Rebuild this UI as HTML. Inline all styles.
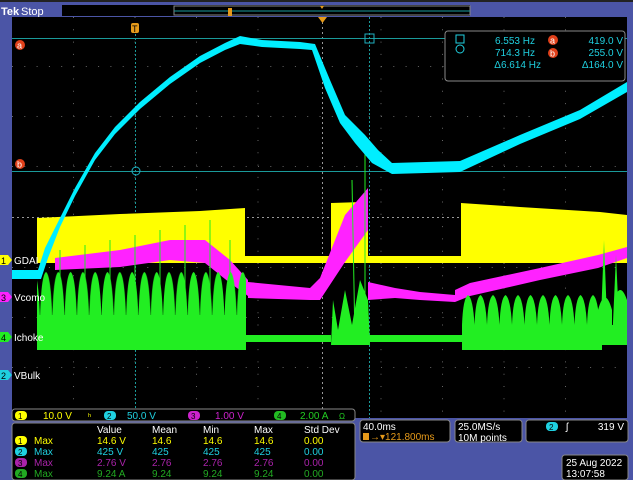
<!DOCTYPE html>
<html><head><meta charset="utf-8"><style>
body{margin:0;width:633px;height:480px;overflow:hidden;background:#4b55a6;font-family:"Liberation Sans",sans-serif}
svg{position:absolute;left:0;top:0}
text{font-family:"Liberation Sans",sans-serif}
</style></head><body>
<svg width="633" height="480" viewBox="0 0 633 480">
<defs>
<pattern id="hump" x="40" y="0" width="12.3" height="480" patternUnits="userSpaceOnUse">
<path d="M0 350 L0 320 Q1 275 6 272 Q11 275 12.3 320 L12.3 350 Z" fill="#22ee22"/>
</pattern>
<pattern id="hump2" x="462" y="0" width="12.5" height="480" patternUnits="userSpaceOnUse">
<path d="M0 350 L0 325 Q1 298 6 295 Q11 298 12.5 325 L12.5 350 Z" fill="#22ee22"/>
</pattern>
<pattern id="scal" x="40" y="0" width="12.3" height="480" patternUnits="userSpaceOnUse">
<path d="M0 340 Q6 352 12.3 340 Z" fill="#22ee22"/>
</pattern>
</defs>
<rect x="0" y="0" width="633" height="480" fill="#4b55a6"/>
<rect x="0" y="0" width="633" height="2" fill="#222"/>
<rect x="62" y="5" width="408" height="11" fill="#000"/>
<rect x="174" y="6" width="296" height="9" fill="none" stroke="#888" stroke-width="1"/>
<line x1="174" y1="11" x2="470" y2="11" stroke="#1a9a9a"/>
<rect x="228" y="8" width="4" height="8" fill="#e69a1a"/>
<path d="M320 6 L324 6 L322 9 Z" fill="#e69a1a"/>
<text x="1" y="15" font-size="11" fill="#fff" font-weight="bold">Tek</text>
<text x="21" y="15" font-size="11" fill="#fff">Stop</text>
<rect x="12" y="17" width="615" height="401" fill="#000"/>
<g stroke="#666" stroke-width="1" stroke-dasharray="1 11.3">
<line x1="12" y1="66.5" x2="627" y2="66.5"/><line x1="12" y1="116.5" x2="627" y2="116.5"/>
<line x1="12" y1="166.5" x2="627" y2="166.5"/><line x1="12" y1="267.5" x2="627" y2="267.5"/>
<line x1="12" y1="317.5" x2="627" y2="317.5"/><line x1="12" y1="367.5" x2="627" y2="367.5"/>
<line x1="73.5" y1="17" x2="73.5" y2="418"/><line x1="135" y1="17" x2="135" y2="418"/>
<line x1="196.5" y1="17" x2="196.5" y2="418"/><line x1="258" y1="17" x2="258" y2="418"/>
<line x1="381" y1="17" x2="381" y2="418"/><line x1="442.5" y1="17" x2="442.5" y2="418"/>
<line x1="504" y1="17" x2="504" y2="418"/><line x1="565.5" y1="17" x2="565.5" y2="418"/>
</g>
<line x1="12" y1="217.5" x2="627" y2="217.5" stroke="#999" stroke-dasharray="2 3"/>
<line x1="322.5" y1="17" x2="322.5" y2="418" stroke="#999" stroke-dasharray="2 3"/>
<path d="M318 17 L327 17 L322.5 23 Z" fill="#e69a1a"/>
<line x1="135.5" y1="26" x2="135.5" y2="418" stroke="#1a9a9a" stroke-dasharray="2 2"/>
<line x1="369.5" y1="17" x2="369.5" y2="418" stroke="#1a9a9a" stroke-dasharray="2 2"/>
<line x1="12" y1="38.5" x2="627" y2="38.5" stroke="#1a9a9a"/>
<line x1="12" y1="171.5" x2="627" y2="171.5" stroke="#1a9a9a"/>
<rect x="131" y="23" width="8" height="10" rx="2" fill="#e69a1a"/>
<text x="132" y="32" font-size="9" fill="#000">T</text>
<rect x="365" y="34" width="9" height="9" fill="none" stroke="#1fb0c0"/>
<circle cx="136" cy="171" r="4" fill="none" stroke="#1fb0c0"/>
<circle cx="20" cy="45" r="5" fill="#e0401a"/><text x="17" y="48.5" font-size="9" fill="#fff">a</text>
<circle cx="20" cy="164" r="5" fill="#e0401a"/><text x="17" y="167.5" font-size="9" fill="#fff">b</text>
<!-- yellow -->
<rect x="37" y="256" width="590" height="7" fill="#ffff00"/>
<path d="M37 263 L37 218 L120 214 L200 211 L245 208 L245 263 Z" fill="#ffff00"/>
<path d="M331 262 L331 203 L362 202 L368 200 L368 262 Z" fill="#ffff00"/>
<path d="M461 262 L461 203 L520 207 L600 212 L627 215 L627 262 Z" fill="#ffff00"/>
<!-- magenta -->
<path d="M55 270 L55 258 L120 250 L170 240 L205 240 L230 260 L248 280 L248 296 L230 283 L205 263 L170 260 L120 267 Z" fill="#ff22ff"/>
<path d="M248 282 L310 288 L320 278 L345 215 L368 188 L368 230 L345 262 L320 300 L310 300 L248 298 Z" fill="#ff22ff"/>
<path d="M368 282 L395 288 L420 292 L455 295 L455 302 L420 300 L395 298 L368 300 Z" fill="#ff22ff"/>
<path d="M455 290 L470 283 L540 268 L598 255 L627 247 L627 258 L598 268 L540 280 L470 296 L455 302 Z" fill="#ff22ff"/>
<!-- green -->
<rect x="37" y="270" width="209" height="80" fill="url(#hump)"/>
<rect x="37" y="315" width="209" height="25" fill="#22ee22"/>
<rect x="37" y="339" width="209" height="14" fill="url(#scal)"/>
<rect x="246" y="335" width="85" height="7" fill="#22ee22"/>
<rect x="369" y="335" width="93" height="7" fill="#22ee22"/>
<path d="M331 345 L333 300 L338 330 L345 290 L352 325 L360 280 L368 300 L370 345 Z" fill="#22ee22"/>
<rect x="462" y="290" width="140" height="60" fill="url(#hump2)"/>
<rect x="462" y="325" width="165" height="20" fill="#22ee22"/>
<path d="M600 345 L604 240 L608 345 Z M612 345 L616 255 L620 345 Z M598 345 L598 310 Q605 285 612 310 L612 345 Z M614 345 L614 300 Q620 280 627 300 L627 345 Z" fill="#22ee22"/>
<g stroke="#22ee22" stroke-width="1">
<line x1="60" y1="340" x2="60" y2="250"/><line x1="85" y1="340" x2="85" y2="245"/><line x1="110" y1="340" x2="110" y2="240"/>
<line x1="135" y1="340" x2="135" y2="235"/><line x1="160" y1="340" x2="160" y2="230"/><line x1="185" y1="340" x2="185" y2="225"/>
<line x1="210" y1="340" x2="210" y2="220"/><line x1="230" y1="340" x2="230" y2="240"/>
<line x1="355" y1="340" x2="352" y2="180"/><line x1="365" y1="340" x2="365" y2="150"/>
</g>
<!-- cyan -->
<path d="M12 270 L38 270 L45 248 L60 218 L75 188 L95 153 L115 127 L140 102 L170 77 L200 56 L225 43 L240 36 L262 40 L300 42 L315 44 L330 80 L345 115 L365 135 L378 150 L392 163 L460 161 L520 135 L580 110 L627 82 L627 92 L580 119 L520 144 L460 172 L392 174 L372 163 L355 143 L340 123 L325 88 L312 50 L300 49 L262 47 L240 44 L225 50 L200 63 L170 84 L140 109 L115 134 L95 160 L75 196 L60 227 L48 258 L41 279 L12 279 Z" fill="#00eeff"/>
<rect x="445" y="31" width="180" height="50" rx="3" fill="#000" stroke="#888"/>
<g font-size="10" fill="#1fd0e0">
<rect x="456" y="35" width="8" height="8" fill="none" stroke="#1fd0e0"/>
<circle cx="460" cy="49" r="4" fill="none" stroke="#1fd0e0"/>
<text x="535" y="44" text-anchor="end">6.553 Hz</text>
<text x="535" y="56" text-anchor="end">714.3 Hz</text>
<text x="541" y="68" text-anchor="end">Δ6.614 Hz</text>
<text x="623" y="44" text-anchor="end">419.0 V</text>
<text x="623" y="56" text-anchor="end">255.0 V</text>
<text x="623" y="68" text-anchor="end">Δ164.0 V</text>
</g>
<circle cx="553" cy="40" r="5" fill="#e0401a"/><text x="550" y="43.5" font-size="9" fill="#fff">a</text>
<circle cx="553" cy="53" r="5" fill="#e0401a"/><text x="550" y="56.5" font-size="9" fill="#fff">b</text>
<g font-size="10">
<path d="M0 255 L8 255 L12 260 L8 265 L0 265 Z" fill="#ffff00"/><text x="1" y="264" fill="#000" font-size="9">1</text><text x="14" y="264" fill="#fff">GDAI</text>
<path d="M0 292 L8 292 L12 297 L8 302 L0 302 Z" fill="#ff22ff"/><text x="1" y="301" fill="#000" font-size="9">3</text><text x="14" y="301" fill="#fff">Vcomo</text>
<path d="M0 332 L8 332 L12 337 L8 342 L0 342 Z" fill="#22ee22"/><text x="1" y="341" fill="#000" font-size="9">4</text><text x="14" y="341" fill="#fff">Ichoke</text>
<path d="M0 370 L8 370 L12 375 L8 380 L0 380 Z" fill="#1fd0e0"/><text x="1" y="379" fill="#000" font-size="9">2</text><text x="14" y="379" fill="#fff">VBulk</text>
</g>
<rect x="12" y="409" width="343" height="12" rx="3" fill="#000" stroke="#888"/>
<g font-size="10">
<rect x="15" y="411" width="12" height="9" rx="4" fill="#ffff00"/><text x="18" y="419" font-size="8">1</text>
<text x="43" y="419" fill="#ffff00">10.0 V</text>
<text x="88" y="419" fill="#ffff00" font-size="8">ʰ</text>
<rect x="104" y="411" width="12" height="9" rx="4" fill="#1fd0e0"/><text x="107" y="419" font-size="8">2</text>
<text x="127" y="419" fill="#1fd0e0">50.0 V</text>
<rect x="188" y="411" width="12" height="9" rx="4" fill="#cc22cc"/><text x="191" y="419" font-size="8">3</text>
<text x="215" y="419" fill="#cc22cc">1.00 V</text>
<rect x="274" y="411" width="12" height="9" rx="4" fill="#22bb22"/><text x="277" y="419" font-size="8">4</text>
<text x="300" y="419" fill="#22cc22">2.00 A</text><text x="339" y="419" fill="#22cc22" font-size="8">Ω</text>
</g>
<rect x="12" y="423" width="343" height="57" rx="3" fill="#000" stroke="#888"/>
<g font-size="10">
<g fill="#fff"><text x="97" y="433">Value</text><text x="152" y="433">Mean</text><text x="203" y="433">Min</text><text x="254" y="433">Max</text><text x="304" y="433">Std Dev</text></g>
<rect x="15" y="436" width="12" height="9" rx="4" fill="#ffff00"/><text x="18" y="444" font-size="8">1</text>
<g fill="#ffff00"><text x="34" y="444">Max</text><text x="97" y="444">14.6 V</text><text x="152" y="444">14.6</text><text x="203" y="444">14.6</text><text x="254" y="444">14.6</text><text x="304" y="444">0.00</text></g>
<rect x="15" y="447" width="12" height="9" rx="4" fill="#1fd0e0"/><text x="18" y="455" font-size="8">2</text>
<g fill="#1fd0e0"><text x="34" y="455">Max</text><text x="97" y="455">425 V</text><text x="152" y="455">425</text><text x="203" y="455">425</text><text x="254" y="455">425</text><text x="304" y="455">0.00</text></g>
<rect x="15" y="458" width="12" height="9" rx="4" fill="#aa22aa"/><text x="18" y="466" font-size="8">3</text>
<g fill="#aa22aa"><text x="34" y="466">Max</text><text x="97" y="466">2.76 V</text><text x="152" y="466">2.76</text><text x="203" y="466">2.76</text><text x="254" y="466">2.76</text><text x="304" y="466">0.00</text></g>
<rect x="15" y="469" width="12" height="9" rx="4" fill="#22aa22"/><text x="18" y="477" font-size="8">4</text>
<g fill="#22aa22"><text x="34" y="477">Max</text><text x="97" y="477">9.24 A</text><text x="152" y="477">9.24</text><text x="203" y="477">9.24</text><text x="254" y="477">9.24</text><text x="304" y="477">0.00</text></g>
</g>
<rect x="360" y="420" width="90" height="22" rx="3" fill="#000" stroke="#888"/>
<text x="363" y="430" font-size="10" fill="#fff">40.0ms</text>
<rect x="363" y="433" width="6" height="7" fill="#e69a1a"/>
<text x="370" y="440" font-size="10" fill="#e69a1a">→▾121.800ms</text>
<rect x="455" y="420" width="67" height="22" rx="3" fill="#000" stroke="#888"/>
<text x="458" y="430" font-size="10" fill="#fff">25.0MS/s</text>
<text x="458" y="441" font-size="10" fill="#fff">10M points</text>
<rect x="526" y="420" width="102" height="22" rx="3" fill="#000" stroke="#888"/>
<rect x="546" y="422" width="12" height="9" rx="4" fill="#1fd0e0"/><text x="549" y="430" font-size="8">2</text>
<text x="566" y="430" font-size="10" fill="#fff">ʃ</text>
<text x="624" y="430" font-size="10" fill="#fff" text-anchor="end">319 V</text>
<rect x="562" y="455" width="66" height="25" rx="3" fill="#000" stroke="#888"/>
<text x="566" y="466" font-size="10" fill="#fff">25 Aug 2022</text>
<text x="566" y="477" font-size="10" fill="#fff">13:07:58</text>
</svg>
</body></html>
